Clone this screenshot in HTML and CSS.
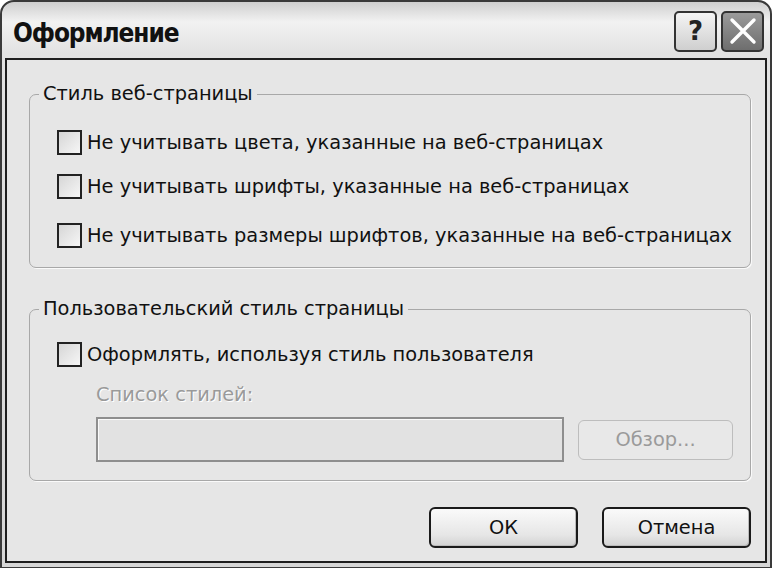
FILE: index.html
```html
<!DOCTYPE html>
<html>
  <head>
    <title>Оформление</title>
    <meta charset="utf-8">
    <link rel="stylesheet" href="styles.css">
  </head>
  <body>
    <div class="window">
      <div class="titlebar">
        <div class="title">Оформление</div>
        <div class="caption-buttons">
          <div class="cap-btn help">?</div>
          <div class="cap-btn close">
            <svg width="30" height="30" viewBox="0 0 30 30">
              <path d="M4 4 L26 26 M26 4 L4 26" stroke="#fff" stroke-width="3.4" stroke-linecap="round"/>
            </svg>
          </div>
        </div>
      </div>

      <div class="client">
        <fieldset class="group group-web">
          <legend>Стиль веб-страницы</legend>
          <label class="check"><span class="box"></span>Не учитывать цвета, указанные на веб-страницах</label>
          <label class="check"><span class="box"></span>Не учитывать шрифты, указанные на веб-страницах</label>
          <label class="check"><span class="box"></span>Не учитывать размеры шрифтов, указанные на веб-страницах</label>
        </fieldset>

        <fieldset class="group group-user">
          <legend>Пользовательский стиль страницы</legend>
          <label class="check"><span class="box"></span>Оформлять, используя стиль пользователя</label>
          <div class="styles-list">
            <div class="disabled-label">Список стилей:</div>
            <div class="file-row">
              <div class="file-input"></div>
              <div class="btn btn-disabled">Обзор...</div>
            </div>
          </div>
        </fieldset>

        <div class="footer">
          <div class="btn btn-default">ОК</div>
          <div class="btn btn-main">Отмена</div>
        </div>
      </div>
    </div>
  </body>
</html>
```

FILE: styles.css
```css
* {
  box-sizing: border-box;
  margin: 0;
  padding: 0;
}

body {
  background-color: #fff;
  font-family: "DejaVu Sans", sans-serif;
  font-size: 19.4px;
  color: #111;
}

.window {
  width: 772px;
  height: 568px;
  display: flex;
  flex-direction: column;
  border: 2px solid #3a3a3a;
  border-bottom-width: 1px;
  border-radius: 14px 14px 0 0;
  background: linear-gradient(#cfcfcf, #f2f2f2 20px, #e2e2e2 52px, #d6d6d6);
}

.titlebar {
  height: 56px;
  display: flex;
  align-items: center;
  justify-content: space-between;
  padding: 0 6px 0 11px;
}

.title {
  font-family: "DejaVu Sans Condensed", "DejaVu Sans", sans-serif;
  font-weight: bold;
  font-size: 26px;
  letter-spacing: -1.1px;
  color: #111;
  padding-top: 6px;
}

.caption-buttons {
  display: flex;
  gap: 4px;
  padding-top: 2px;
}

.cap-btn {
  width: 43px;
  height: 41px;
  border: 2px solid #333;
  border-radius: 5px;
  display: flex;
  align-items: center;
  justify-content: center;
}
.help {
  background: linear-gradient(#f4f4f4, #cfcfcf);
  font-weight: bold;
  font-size: 26px;
  color: #222;
}
.close {
  background: linear-gradient(#9a9a9a, #6e6e6e);
}

.client {
  flex: 1;
  margin: 0 3px 4px;
  border: 2px solid #1e1e1e;
  background-color: #e6e6e6;
  padding: 22px 14px 0 22px;
  display: flex;
  flex-direction: column;
}

.group {
  border: 1px solid #a8a8a8;
  border-radius: 7px;
  padding: 0 0 0 27px;
  box-shadow: 1px 1px 0 #fafafa;
}
.group legend {
  margin-left: -18px;
  padding: 0 4px;
  line-height: 24px;
}
.group-web {
  height: 186px;
  padding-top: 24px;
}
.group-user {
  height: 184px;
  margin-top: 29px;
  padding-top: 21px;
}

.check {
  display: flex;
  align-items: center;
  height: 24px;
  margin-bottom: 20px;
}
.group-web .check:nth-child(4) {
  margin-top: 25px;
}
.group-user .check {
  margin-bottom: 17px;
}
.box {
  width: 25px;
  height: 25px;
  margin-right: 5px;
  border: 2px solid #222;
  background: linear-gradient(135deg, #d6d6d6, #f6f6f6);
}

.styles-list {
  padding-left: 39px;
}
.disabled-label {
  color: #9a9a9a;
  text-shadow: 1px 1px 0 #fff;
  line-height: 24px;
}
.file-row {
  display: flex;
  align-items: center;
  gap: 14px;
  margin-top: 10px;
}
.file-input {
  width: 468px;
  height: 45px;
  border: 2px solid #8e8e8e;
  background-color: #e2e2e2;
  box-shadow: inset 1px 1px 0 #fafafa;
}

.btn {
  display: flex;
  align-items: center;
  justify-content: center;
  border-radius: 6px;
}
.btn-disabled {
  width: 155px;
  height: 40px;
  border: 1px solid #bdbdbd;
  color: #9a9a9a;
  background-color: #e8e8e8;
}

.footer {
  display: flex;
  justify-content: flex-end;
  gap: 24px;
  margin-top: 26px;
}
.btn-default,
.btn-main {
  width: 149px;
  height: 41px;
  border: 2px solid #1a1a1a;
  background: linear-gradient(#fafafa, #e6e6e6 70%, #d2d2d2);
  box-shadow: inset -1px -1px 0 #bbb;
}
```
